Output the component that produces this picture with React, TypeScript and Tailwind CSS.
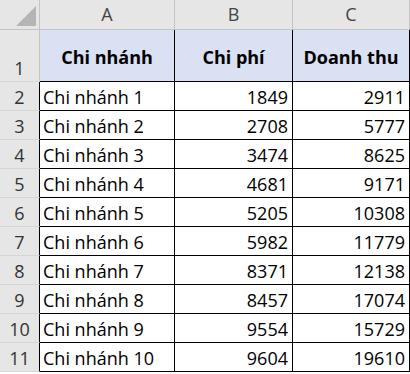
const rows: [string, number, number][] = [
  ["Chi nhánh 1", 1849, 2911],
  ["Chi nhánh 2", 2708, 5777],
  ["Chi nhánh 3", 3474, 8625],
  ["Chi nhánh 4", 4681, 9171],
  ["Chi nhánh 5", 5205, 10308],
  ["Chi nhánh 6", 5982, 11779],
  ["Chi nhánh 7", 8371, 12138],
  ["Chi nhánh 8", 8457, 17074],
  ["Chi nhánh 9", 9554, 15729],
  ["Chi nhánh 10", 9604, 19610],
];

const cols = "grid grid-cols-[40px_135px_118px_117px]";

export default function App() {
  return (
    <div className="h-[374px] w-[410px] overflow-hidden bg-white font-['Open_Sans','Lato',sans-serif] text-[18px] leading-[22px] text-black">
      {/* column letters */}
      <div className={`${cols} h-[30px] bg-[#e6e6e6] text-[#444]`}>
        <div className="relative border-r border-b border-[#c4c4c4]">
          <svg className="absolute right-[3px] bottom-[3px]" width="20" height="20">
            <polygon points="20,0 20,20 0,20" fill="#b5b5b5" />
          </svg>
        </div>
        {["A", "B", "C"].map((c) => (
          <div
            key={c}
            className="flex items-center justify-center border-r border-b border-[#c4c4c4] pb-[1px]"
          >
            {c}
          </div>
        ))}
      </div>

      {/* header row */}
      <div className={`${cols} h-[52px]`}>
        <div className="flex items-end justify-center border-r border-b border-[#c4c4c4] border-b-[#d6d6d6] bg-[#e6e6e6] pb-[2px] text-[#333]">
          1
        </div>
        {["Chi nhánh", "Chi phí", "Doanh thu"].map((h) => (
          <div
            key={h}
            className="flex items-center justify-center border-r border-b border-black bg-[#d9e1f2] pt-[3px] font-bold"
          >
            {h}
          </div>
        ))}
      </div>

      {rows.map(([name, cost, rev], i) => (
        <div key={name} className={`${cols} h-[29px]`}>
          <div className="flex items-end justify-center border-r border-b border-r-black border-b-[#d6d6d6] bg-[#e6e6e6] pb-[2px] text-[#333]">
            {i + 2}
          </div>
          <div className="flex items-end border-r border-b border-black pb-[2px] pl-[3px]">
            {name}
          </div>
          <div className="flex items-end justify-end border-r border-b border-black pb-[2px] pr-[4px]">
            {cost}
          </div>
          <div className="flex items-end justify-end border-r border-b border-black pb-[2px] pr-[4px]">
            {rev}
          </div>
        </div>
      ))}
    </div>
  );
}
